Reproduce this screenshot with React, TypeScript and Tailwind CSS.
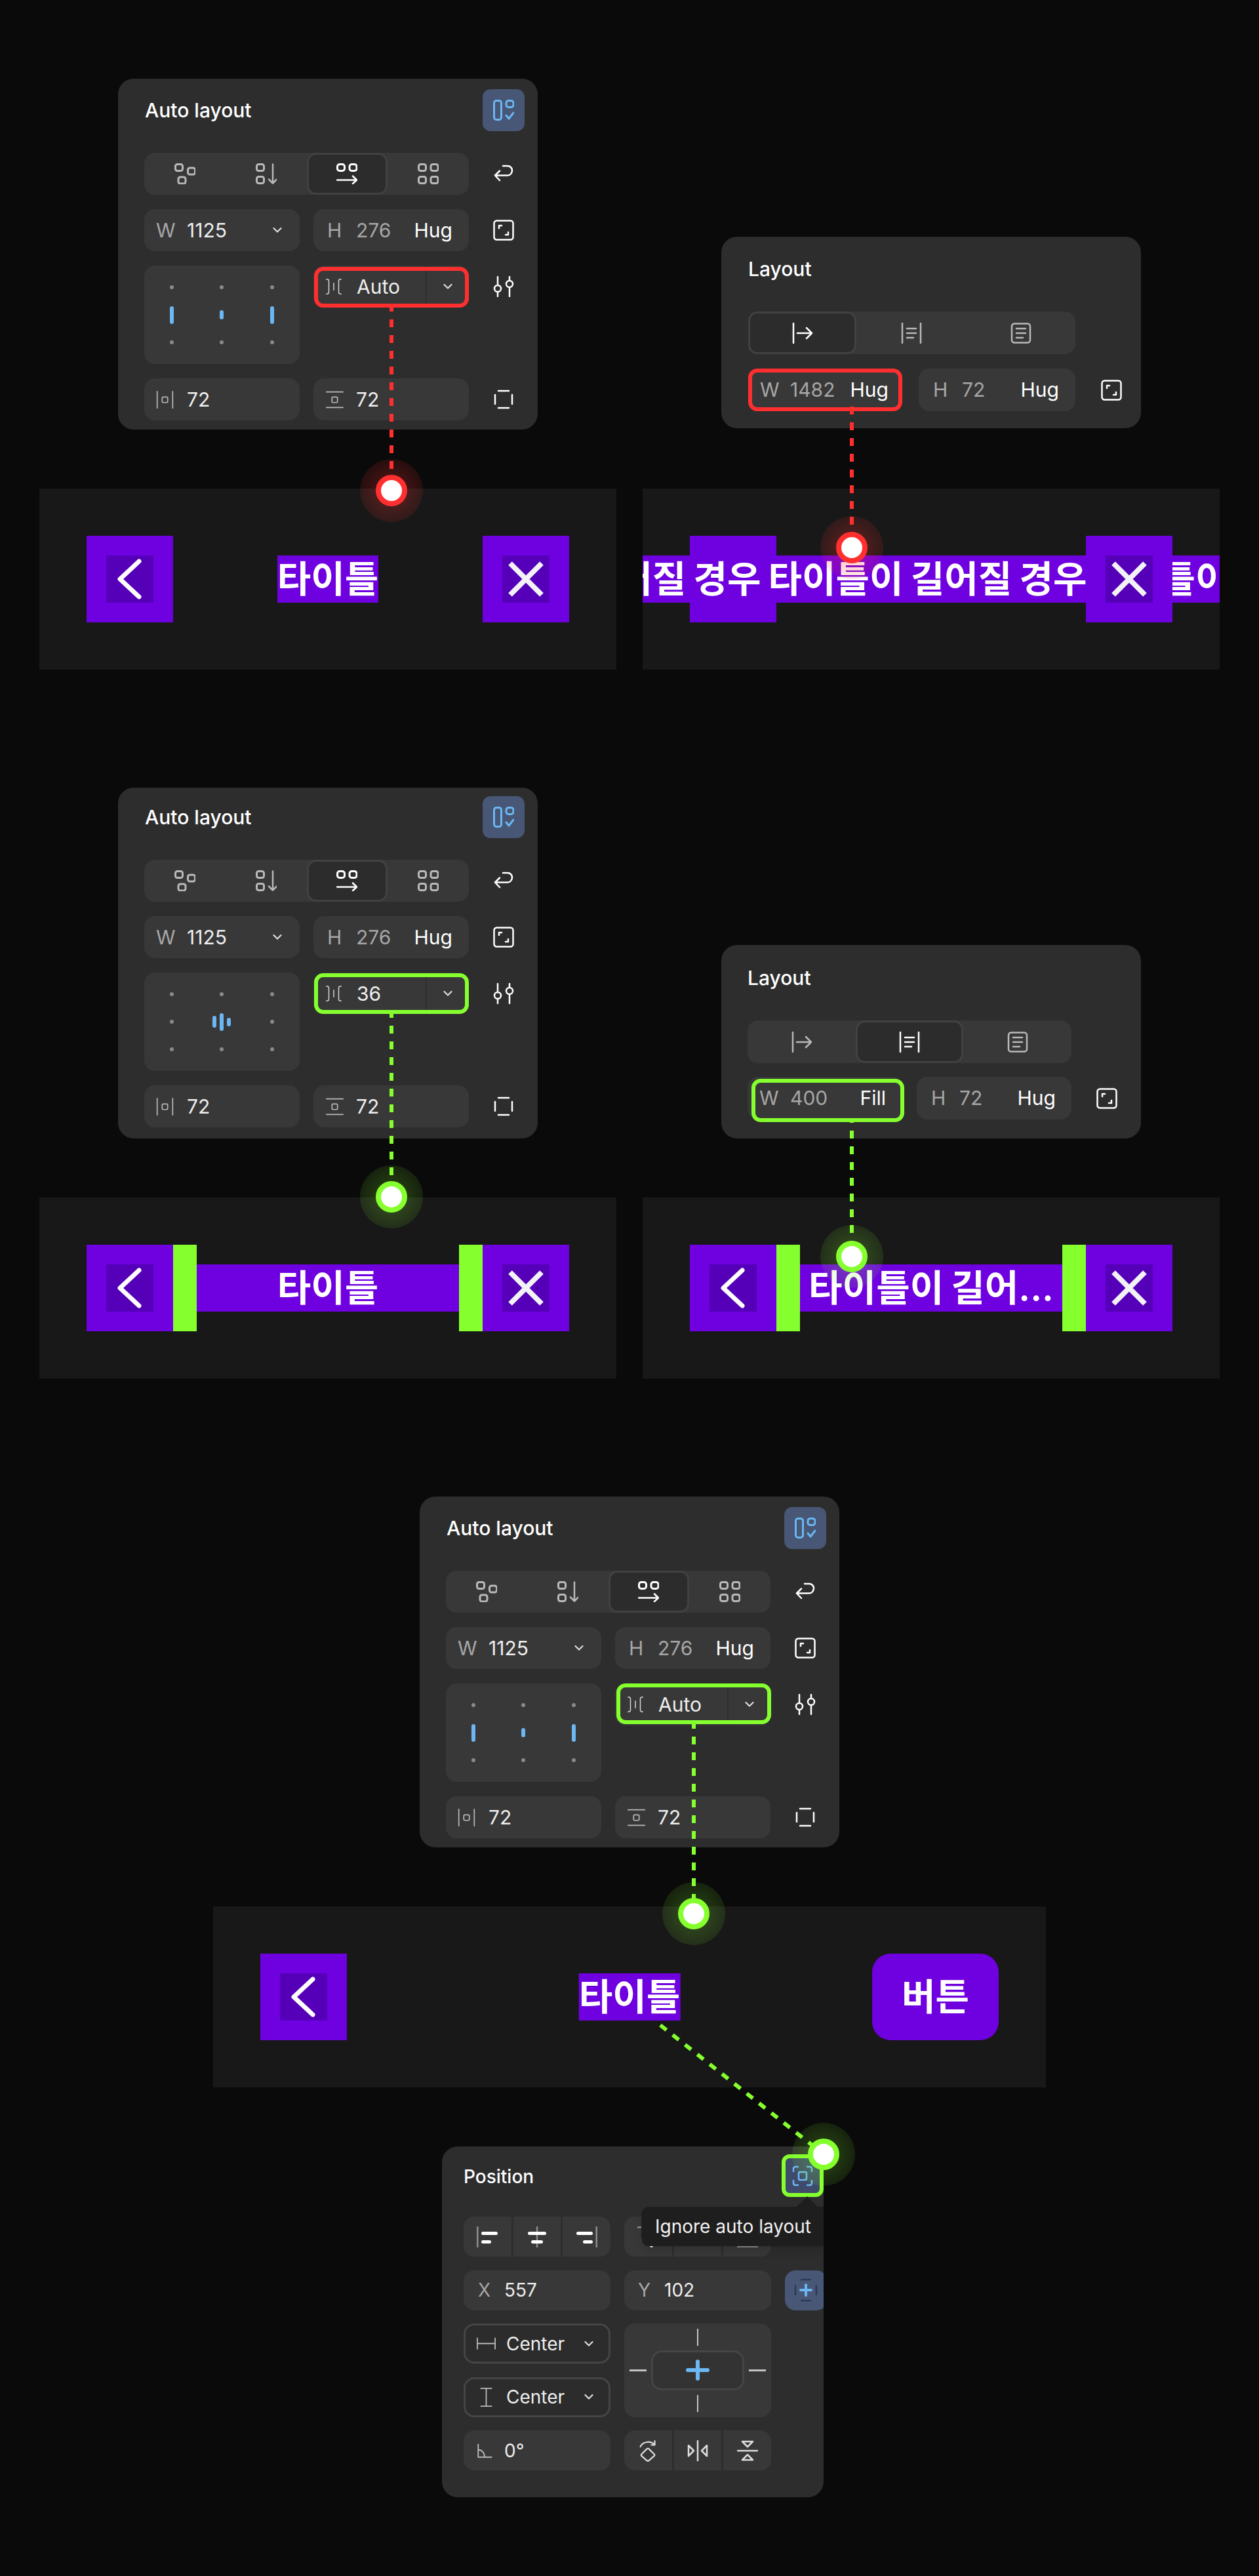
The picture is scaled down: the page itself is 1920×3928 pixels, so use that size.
import type { ReactNode } from 'react';

const BLUE = '#6cb6f2';
const GRAY = '#b9b9b9';
const RED = '#ff2f2f';
const GREEN = '#85ff2e';

function Svg({ children, className = 'w-8 h-8', color = GRAY, sw = 3 }: { children: ReactNode; className?: string; color?: string; sw?: number }) {
  return (
    <svg viewBox="0 0 32 32" className={`${className} shrink-0`} fill="none" stroke={color} strokeWidth={sw} strokeLinecap="round" strokeLinejoin="round">
      {children}
    </svg>
  );
}

// Auto layout mode icons
const FreeIcon = () => (
  <Svg>
    <rect x="1.5" y="1.5" width="11" height="10" rx="3" />
    <rect x="20.5" y="7" width="11" height="10" rx="3" />
    <rect x="6" y="21" width="11" height="10" rx="3" />
  </Svg>
);
const VerticalIcon = () => (
  <Svg>
    <rect x="1.5" y="1.5" width="11" height="10" rx="3" />
    <rect x="1.5" y="20.5" width="11" height="10" rx="3" />
    <path d="M26 1.5V30.5M20 24.5L26 30.5L32 24.5" strokeWidth="2.5" />
  </Svg>
);
const HorizontalIcon = () => (
  <Svg color="#ffffff">
    <rect x="1.5" y="1.5" width="11" height="10" rx="3.5" />
    <rect x="20" y="1.5" width="11" height="10" rx="3.5" />
    <path d="M1 25.5H31M25 19.5L31 25.5L25 31" strokeWidth="2.5" />
  </Svg>
);
const GridIcon = () => (
  <Svg>
    <rect x="1.5" y="1.5" width="11" height="10" rx="3" />
    <rect x="20" y="1.5" width="11" height="10" rx="3" />
    <rect x="1.5" y="20.5" width="11" height="10" rx="3" />
    <rect x="20" y="20.5" width="11" height="10" rx="3" />
  </Svg>
);
const WrapIcon = () => (
  <Svg color="#ffffff" sw={2.5}>
    <path d="M15 4H22C26 4 29 7 29 11C29 15 26 18.5 22 18.5H3M10 11.5L3 18.5L10 26" />
  </Svg>
);
const ResizeIcon = () => (
  <Svg color="#ffffff" sw={2.5}>
    <rect x="1.5" y="1.5" width="29" height="29" rx="4" />
    <path d="M9 13V9H13M19 23H23V19" />
  </Svg>
);
const SlidersIcon = () => (
  <Svg color="#ffffff" sw={2.5}>
    <path d="M7 1V14M7 24V31M25 1V6M25 18V31" />
    <circle cx="7" cy="19" r="5" />
    <circle cx="25" cy="12" r="5" />
  </Svg>
);
const PaddingAllIcon = () => (
  <Svg color="#ffffff" sw={2.5}>
    <path d="M8 3H24M8 29H24M3 9V23M29 9V23" />
  </Svg>
);
const PadHIcon = () => (
  <Svg className="w-[27px] h-[27px]" sw={2}>
    <path d="M2 1V31M30 1V31" />
    <rect x="11" y="11" width="10" height="10" rx="2" />
  </Svg>
);
const PadVIcon = () => (
  <Svg className="w-[27px] h-[27px]" sw={2}>
    <path d="M1 2H31M1 30H31" />
    <rect x="11" y="11" width="10" height="10" rx="2" />
  </Svg>
);
const GapIcon = () => (
  <Svg className="w-6 h-6" color="#d5d5d5" sw={2}>
    <path d="M1 1C6 1 6 3 6 6V26C6 29 6 31 1 31M31 1C26 1 26 3 26 6V26C26 29 26 31 31 31M16 9V23" />
  </Svg>
);
const ToggleIcon = () => (
  <Svg color={BLUE}>
    <rect x="1.5" y="1.5" width="11" height="29" rx="3.5" />
    <rect x="20" y="1.5" width="11" height="10" rx="3.5" />
    <path d="M20 24L24 29L31 20" />
  </Svg>
);

// Layout panel icons
const HugArrowIcon = ({ color = GRAY }: { color?: string }) => (
  <Svg color={color} sw={2.5}>
    <path d="M2 1V31M8 16H30M22 8L30 16L22 24" />
  </Svg>
);
const FillTextIcon = ({ color = GRAY }: { color?: string }) => (
  <Svg color={color} sw={2.5}>
    <path d="M2 1V31M30 1V31M9 9H23M9 16H23M9 23H19" />
  </Svg>
);
const DocIcon = () => (
  <Svg sw={2.5}>
    <rect x="2" y="1.5" width="28" height="29" rx="4" />
    <path d="M9 9H23M9 16H23M9 23H19" />
  </Svg>
);
const Chevron = () => (
  <svg viewBox="0 0 14 10" className="w-[14px] h-[10px] shrink-0" fill="none" stroke="#dddddd" strokeWidth="2.2" strokeLinecap="round" strokeLinejoin="round">
    <path d="M1.5 2L7 7.5L12.5 2" />
  </svg>
);

// Position panel icons
const AlignLeft = ({ className = 'w-8 h-8' }: { className?: string }) => (
  <svg viewBox="0 0 32 32" className={`${className} shrink-0`}>
    <rect x="0" y="0" width="2.5" height="32" fill="#8d8d8d" />
    <rect x="7" y="8" width="25" height="5" rx="2.5" fill="#ffffff" />
    <rect x="7" y="21" width="15" height="5" rx="2.5" fill="#ffffff" />
  </svg>
);
const AlignCenter = ({ className = 'w-8 h-8' }: { className?: string }) => (
  <svg viewBox="0 0 32 32" className={`${className} shrink-0`}>
    <rect x="14.8" y="0" width="2.5" height="32" fill="#8d8d8d" />
    <rect x="2" y="8" width="28" height="5" rx="2.5" fill="#ffffff" />
    <rect x="7" y="21" width="18" height="5" rx="2.5" fill="#ffffff" />
  </svg>
);
const AlignRight = ({ className = 'w-8 h-8' }: { className?: string }) => (
  <svg viewBox="0 0 32 32" className={`${className} shrink-0`}>
    <rect x="29.5" y="0" width="2.5" height="32" fill="#8d8d8d" />
    <rect x="0" y="8" width="25" height="5" rx="2.5" fill="#ffffff" />
    <rect x="10" y="21" width="15" height="5" rx="2.5" fill="#ffffff" />
  </svg>
);
const IgnoreIcon = () => (
  <Svg color={BLUE} sw={2.5}>
    <path d="M2 9V5C2 3 3 2 5 2H9M23 2H27C29 2 30 3 30 5V9M30 23V27C30 29 29 30 27 30H23M9 30H5C3 30 2 29 2 27V23" />
    <rect x="10" y="10" width="12" height="12" rx="2" />
  </Svg>
);
const ConstraintPlusIcon = () => (
  <svg viewBox="0 0 36 36" className="w-9 h-9 shrink-0" fill="none" strokeLinecap="round">
    <path d="M11 2H25M11 34H25M2 11V25M34 11V25" stroke="#2f3a55" strokeWidth="2.5" />
    <path d="M18 10V26M10 18H26" stroke={BLUE} strokeWidth="4" />
  </svg>
);
const WidthIcon = () => (
  <Svg className="w-[29px] h-[29px]" sw={2}>
    <path d="M1 7V25M31 7V25M1 16H31" />
  </Svg>
);
const HeightIcon = () => (
  <Svg className="w-[29px] h-[29px]" sw={2}>
    <path d="M7 1H25M7 31H25M16 1V31" />
  </Svg>
);
const AngleIcon = () => (
  <Svg className="w-6 h-6" sw={2.5}>
    <path d="M3 3V29H30M3 14C10 14 16 20 16 29" />
  </Svg>
);
const RotateIcon = () => (
  <svg viewBox="0 0 32 38" className="w-[28px] h-[34px] shrink-0" fill="none" stroke="#dddddd" strokeWidth="2.5" strokeLinecap="round" strokeLinejoin="round">
    <path d="M3 12C6 4 20 0 28 9M28 2V9H22" />
    <path d="M14 16C15 14.800 17 14.800 18 16L27 25C28 26 28 27 27 28L18 36C17 37 15 37 14 36L5 28C4 27 4 26 5 25Z" />
  </svg>
);
const FlipHIcon = () => (
  <Svg color="#dddddd" sw={2.5}>
    <path d="M16 1V31M2 8L10 16L2 24ZM30 8L22 16L30 24Z" />
  </Svg>
);
const FlipVIcon = () => (
  <Svg color="#dddddd" sw={2.5}>
    <path d="M1 16H31M8 2H24L16 10ZM8 30H24L16 22Z" />
  </Svg>
);

// Panels
function Field({ className = '', children }: { className?: string; children: ReactNode }) {
  return <div className={`relative flex items-center rounded-2xl bg-[#383838] ${className}`}>{children}</div>;
}

function Outline({ color, className }: { color: string; className: string }) {
  const border = color === RED ? 'border-[#ff2f2f]' : 'border-[#85ff2e]';
  return <div className={`absolute rounded-[14px] border-[6px] ${border} ${className}`} />;
}

function SegCell({ active, children }: { active?: boolean; children: ReactNode }) {
  return (
    <div className={`flex items-center justify-center rounded-[14px] ${active ? 'bg-[#2c2c2c] border-[3px] border-[#414141]' : ''}`}>
      {children}
    </div>
  );
}

function AlignBox({ spaced }: { spaced: boolean }) {
  const dot = <div className="w-[6px] h-[6px] rounded-full bg-[#8a8a8a]" />;
  const bar = (h: string) => <div className={`w-[6px] rounded-full bg-[#6cb6f2] ${h}`} />;
  const cells = spaced
    ? [dot, dot, dot, dot, <div className="flex items-center gap-[5px]">{bar('h-[18px]')}{bar('h-[27px]')}{bar('h-[13px]')}</div>, dot, dot, dot, dot]
    : [dot, dot, dot, bar('h-[27px]'), bar('h-[14px]'), bar('h-[27px]'), dot, dot, dot];
  return (
    <div className="grid grid-cols-3 grid-rows-3 rounded-2xl bg-[#383838] px-[4px] py-[12px] h-[150px]">
      {cells.map((c, i) => (
        <div key={i} className="flex items-center justify-center">{c}</div>
      ))}
    </div>
  );
}

function AutoLayoutPanel({ gapValue, color, spaced = false, padTop = 'pt-[16px]', outline }: { gapValue: string; color: string; spaced?: boolean; padTop?: string; outline: string }) {
  return (
    <div className={`w-[640px] h-[535px] rounded-[24px] bg-[#2d2d2d] pl-[40px] pr-[20px] text-[30px] text-[#eeeeee] ${padTop}`}>
      <div className="flex items-center justify-between h-[64px]">
        <span className="ml-px font-medium text-white">Auto layout</span>
        <div className="flex items-center justify-center w-16 h-16 rounded-xl bg-[#475775]">
          <ToggleIcon />
        </div>
      </div>
      <div className="grid grid-cols-[237px_237px_64px] grid-rows-[64px_64px_150px_64px] gap-x-[21px] gap-y-[22px] mt-[33px]">
        <div className="col-span-2 grid grid-cols-4 rounded-2xl bg-[#383838]">
          <SegCell><FreeIcon /></SegCell>
          <SegCell><VerticalIcon /></SegCell>
          <SegCell active><HorizontalIcon /></SegCell>
          <SegCell><GridIcon /></SegCell>
        </div>
        <div className="flex items-center justify-center"><WrapIcon /></div>

        <Field className="pl-[18px] pr-[27px]">
          <span className="w-[47px] text-[#a6a6a6]">W</span>
          <span className="flex-1">1125</span>
          <Chevron />
        </Field>
        <Field className="pl-[21px] pr-[25px]">
          <span className="w-[44px] text-[#a6a6a6]">H</span>
          <span className="flex-1 text-[#a6a6a6]">276</span>
          <span className="text-white">Hug</span>
        </Field>
        <div className="flex items-center justify-center"><ResizeIcon /></div>

        <AlignBox spaced={spaced} />
        <div className="relative h-[64px]">
          <Field className="h-[64px]">
            <div className="flex items-center flex-1 pl-[19px]">
              <div className="w-[47px]"><GapIcon /></div>
              <span>{gapValue}</span>
            </div>
            <div className="flex items-center justify-center w-[66px] h-full border-l-2 border-[#2e2e2e]"><Chevron /></div>
          </Field>
          <Outline color={color} className={outline} />
        </div>
        <div className="flex items-start justify-center pt-[16px]"><SlidersIcon /></div>

        <Field className="pl-[18px]">
          <div className="w-[47px]"><PadHIcon /></div>
          <span>72</span>
        </Field>
        <Field className="pl-[19px]">
          <div className="w-[46px]"><PadVIcon /></div>
          <span>72</span>
        </Field>
        <div className="flex items-center justify-center"><PaddingAllIcon /></div>
      </div>
    </div>
  );
}

function LayoutPanelRed() {
  return (
    <div className="w-[640px] h-[292px] rounded-[24px] bg-[#2d2d2d] pl-[41px] pt-[33px] text-[30px] text-[#eeeeee]">
      <div className="h-8 leading-8 font-medium text-white">Layout</div>
      <div className="grid grid-cols-[165px_167px_167px] w-[499px] h-[65px] mt-[49px] rounded-2xl bg-[#383838]">
        <SegCell active><HugArrowIcon color="#ffffff" /></SegCell>
        <SegCell><FillTextIcon /></SegCell>
        <SegCell><DocIcon /></SegCell>
      </div>
      <div className="flex items-center mt-[22px] h-[65px]">
        <Field className="w-[235px] h-full pl-[18px]">
          <span className="w-[46px] text-[#a6a6a6]">W</span>
          <span className="flex-1 text-[#a6a6a6]">1482</span>
          <span className="mr-[21px] text-white">Hug</span>
          <Outline color={RED} className="inset-0" />
        </Field>
        <Field className="w-[239px] h-full ml-[25px] pl-[22px]">
          <span className="w-[44px] text-[#a6a6a6]">H</span>
          <span className="flex-1 text-[#a6a6a6]">72</span>
          <span className="mr-[25px] text-white">Hug</span>
        </Field>
        <div className="ml-[39px]"><ResizeIcon /></div>
      </div>
    </div>
  );
}

function LayoutPanelGreen() {
  return (
    <div className="w-[640px] h-[295px] rounded-[24px] bg-[#2d2d2d] pl-[40px] pt-[34px] text-[30px] text-[#eeeeee]">
      <div className="h-8 leading-8 font-medium text-white">Layout</div>
      <div className="grid grid-cols-[165px_164px_165px] w-[494px] h-[65px] mt-[49px] rounded-2xl bg-[#383838]">
        <SegCell><HugArrowIcon /></SegCell>
        <SegCell active><FillTextIcon color="#ffffff" /></SegCell>
        <SegCell><DocIcon /></SegCell>
      </div>
      <div className="flex items-center mt-[21px] h-[65px]">
        <Field className="w-[237px] h-full pl-[18px]">
          <span className="w-[47px] text-[#a6a6a6]">W</span>
          <span className="flex-1 text-[#a6a6a6]">400</span>
          <span className="mr-[26px] text-white">Fill</span>
          <Outline color={GREEN} className="left-[6px] right-[-2px] top-[3px] bottom-[-4px]" />
        </Field>
        <Field className="w-[236px] h-full ml-[21px] pl-[22px]">
          <span className="w-[43px] text-[#a6a6a6]">H</span>
          <span className="flex-1 text-[#a6a6a6]">72</span>
          <span className="mr-[24px] text-white">Hug</span>
        </Field>
        <div className="ml-[38px]"><ResizeIcon /></div>
      </div>
    </div>
  );
}

function PosCells({ children }: { children: ReactNode }) {
  return <div className="grid grid-cols-3 gap-x-[3px] rounded-2xl overflow-hidden">{children}</div>;
}
function PosCell({ children }: { children: ReactNode }) {
  return <div className="flex items-center justify-center bg-[#383838]">{children}</div>;
}
function Select({ icon, iconBox }: { icon: ReactNode; iconBox: string }) {
  return (
    <div className="flex items-center rounded-2xl border-[3px] border-[#454545] bg-[#2c2c2c]">
      <div className={`flex justify-center ${iconBox}`}>{icon}</div>
      <span className="flex-1">Center</span>
      <div className="mr-[23px]"><Chevron /></div>
    </div>
  );
}

function PositionPanel() {
  return (
    <div className="relative ml-[10px] w-[582px] h-[535px] rounded-[24px] bg-[#2d2d2d] overflow-hidden pl-[33px] pt-[12px] text-[28px] text-[#eeeeee]">
      <div className="flex items-center justify-between h-[65px]">
        <span className="mt-[3px] font-medium text-white">Position</span>
        <div className="flex items-center justify-center w-16 h-[65px] rounded-xl border-[6px] border-[#85ff2e] bg-[#3f4b6a]">
          <IgnoreIcon />
        </div>
      </div>
      <div className="grid grid-cols-[224px_224px_64px] grid-rows-[61px_61px_61px_61px_61px] gap-x-[21px] gap-y-[20.5px] mt-[30px] w-[600px]">
        <PosCells>
          <PosCell><AlignLeft /></PosCell>
          <PosCell><AlignCenter /></PosCell>
          <PosCell><AlignRight /></PosCell>
        </PosCells>
        <PosCells>
          <PosCell><AlignLeft className="w-8 h-8 rotate-90" /></PosCell>
          <PosCell><AlignCenter className="w-8 h-8 rotate-90" /></PosCell>
          <PosCell><AlignRight className="w-8 h-8 rotate-90" /></PosCell>
        </PosCells>
        <div />

        <Field className="pl-[22px]">
          <span className="w-[40px] text-[#a6a6a6]">X</span>
          <span>557</span>
        </Field>
        <Field className="pl-[21px]">
          <span className="w-[40px] text-[#a6a6a6]">Y</span>
          <span>102</span>
        </Field>
        <div className="flex items-center justify-center rounded-2xl bg-[#475775]"><ConstraintPlusIcon /></div>

        <Select icon={<WidthIcon />} iconBox="w-[62px]" />
        <div className="row-span-2 relative flex items-center justify-center rounded-2xl bg-[#383838]">
          <div className="absolute top-[8px] w-[2.5px] h-[26px] bg-[#c4c4c4]" />
          <div className="absolute bottom-[8px] w-[2.5px] h-[26px] bg-[#c4c4c4]" />
          <div className="absolute left-[8px] w-[26px] h-[2.5px] bg-[#c4c4c4]" />
          <div className="absolute right-[8px] w-[26px] h-[2.5px] bg-[#c4c4c4]" />
          <div className="flex items-center justify-center w-[142px] h-[61px] rounded-2xl border-[3px] border-[#454545] bg-[#333333]">
            <svg viewBox="0 0 36 32" className="w-9 h-8" fill="none" stroke={BLUE} strokeWidth="6" strokeLinecap="round">
              <path d="M18 3V29M3 16H33" />
            </svg>
          </div>
        </div>
        <div />

        <Select icon={<HeightIcon />} iconBox="w-[62px]" />
        <div />

        <Field className="pl-[20px]">
          <div className="w-[42px]"><AngleIcon /></div>
          <span>0°</span>
        </Field>
        <PosCells>
          <PosCell><RotateIcon /></PosCell>
          <PosCell><FlipHIcon /></PosCell>
          <PosCell><FlipVIcon /></PosCell>
        </PosCells>
        <div />
      </div>

      {/* tooltip */}
      <div className="absolute left-[304px] top-[92px] w-[300px] h-[60px] flex items-center pl-[21px] rounded-xl bg-[#1e1e1e] shadow-lg text-[#f2f2f2]">
        <div className="absolute left-[241px] top-[-11px] w-6 h-6 rotate-45 bg-[#1e1e1e]" />
        <span className="relative">Ignore auto layout</span>
      </div>
    </div>
  );
}

// Preview bars
const BackGlyph = () => (
  <svg viewBox="0 0 72 72" className="w-[72px] h-[72px] bg-[#5500b8]" fill="none" stroke="#ffffff" strokeWidth="7" strokeLinecap="round" strokeLinejoin="round">
    <path d="M50 9L21 36L50 63" />
  </svg>
);
const CloseGlyph = () => (
  <svg viewBox="0 0 72 72" className="w-[72px] h-[72px] bg-[#5500b8]" fill="none" stroke="#f2f2f7" strokeWidth="8" strokeLinejoin="round">
    <path d="M12 12L60 60M60 12L12 60" />
  </svg>
);
function IconBtn({ children, className = '' }: { children?: ReactNode; className?: string }) {
  return <div className={`flex items-center justify-center w-[132px] h-[132px] shrink-0 bg-[#6f00e0] ${className}`}>{children}</div>;
}
const Title = ({ children, className = '' }: { children: ReactNode; className?: string }) => (
  <div className={`h-[72px] bg-[#6f00e0] text-[56px] leading-[72px] font-semibold text-white whitespace-nowrap ${className}`}>{children}</div>
);
const Bar = ({ children, className = 'w-[880px]' }: { children: ReactNode; className?: string }) => (
  <div className={`relative flex items-center h-[276px] px-[72px] bg-[#181818] overflow-hidden ${className}`}>{children}</div>
);
const GreenGap = () => <div className="w-[36px] h-[132px] shrink-0 bg-[#85ff2e]" />;

// Annotation lines and pins drawn over the whole page
const LINES = [
  { x1: 597, y1: 463, x2: 597, y2: 748, c: RED, o: 0 },
  { x1: 1299, y1: 620, x2: 1299, y2: 835, c: RED, o: 0 },
  { x1: 597, y1: 1540, x2: 597, y2: 1825, c: GREEN, o: 0 },
  { x1: 1299, y1: 1705, x2: 1299, y2: 1916, c: GREEN, o: 5 },
  { x1: 1058, y1: 2624, x2: 1058, y2: 2918, c: GREEN, o: 0 },
  { x1: 1007, y1: 3088, x2: 1256, y2: 3285, c: GREEN, o: 0 },
];
const PINS = [
  { x: 597, y: 748, c: RED },
  { x: 1299, y: 835, c: RED },
  { x: 597, y: 1825, c: GREEN },
  { x: 1299, y: 1916, c: GREEN },
  { x: 1058, y: 2918, c: GREEN },
  { x: 1256, y: 3285, c: GREEN },
];

function Overlay() {
  return (
    <svg width="1920" height="3928" className="absolute left-0 top-0 pointer-events-none">
      <defs>
        <radialGradient id="halo-red">
          <stop offset="0.4" stopColor={RED} stopOpacity="0.24" />
          <stop offset="1" stopColor={RED} stopOpacity="0.11" />
        </radialGradient>
        <radialGradient id="halo-green">
          <stop offset="0.4" stopColor={GREEN} stopOpacity="0.2" />
          <stop offset="1" stopColor={GREEN} stopOpacity="0.1" />
        </radialGradient>
      </defs>
      {LINES.map((l, i) => (
        <line key={i} x1={l.x1} y1={l.y1} x2={l.x2} y2={l.y2} stroke={l.c} strokeWidth="6" strokeDasharray="12 12" strokeDashoffset={l.o} />
      ))}
      {PINS.map((p, i) => (
        <g key={i}>
          <circle cx={p.x} cy={p.y} r="48" fill={p.c === RED ? 'url(#halo-red)' : 'url(#halo-green)'} />
          <circle cx={p.x} cy={p.y} r="20" fill="#ffffff" stroke={p.c} strokeWidth="8" />
        </g>
      ))}
    </svg>
  );
}

export default function App() {
  return (
    <div className="relative w-full h-[3928px] bg-[#0a0a0a] pt-[120px] font-['Inter','Noto_Sans_CJK_KR',sans-serif]">
      {/* first row */}
      <div className="grid grid-cols-[880px_880px] gap-x-[40px] px-[60px]">
        <div className="flex flex-col items-center justify-end gap-[90px]">
          <AutoLayoutPanel gapValue="Auto" color={RED} outline="left-px right-0 top-[2px] bottom-0" />
          <Bar>
            <IconBtn><BackGlyph /></IconBtn>
            <div className="flex flex-1 justify-center"><Title>타이틀</Title></div>
            <IconBtn><CloseGlyph /></IconBtn>
          </Bar>
        </div>
        <div className="flex flex-col items-center justify-end gap-[92px]">
          <LayoutPanelRed />
          <Bar className="w-[880px] justify-between">
            <IconBtn />
            <Title className="absolute inset-x-0 flex justify-center pr-[11px] [word-spacing:-3px]">타이틀이 길어질 경우 타이틀이 길어질 경우 타이틀이 길어질 경우</Title>
            <IconBtn className="relative"><CloseGlyph /></IconBtn>
          </Bar>
        </div>
      </div>

      {/* second row */}
      <div className="grid grid-cols-[880px_880px] gap-x-[40px] px-[60px] mt-[180px]">
        <div className="flex flex-col items-center justify-end gap-[90px]">
          <AutoLayoutPanel gapValue="36" color={GREEN} spaced padTop="pt-[13px]" outline="left-px right-0 top-px bottom-px" />
          <Bar>
            <IconBtn><BackGlyph /></IconBtn>
            <GreenGap />
            <Title className="flex-1 text-center">타이틀</Title>
            <GreenGap />
            <IconBtn><CloseGlyph /></IconBtn>
          </Bar>
        </div>
        <div className="flex flex-col items-center justify-end gap-[90px]">
          <LayoutPanelGreen />
          <Bar>
            <IconBtn><BackGlyph /></IconBtn>
            <GreenGap />
            <Title className="flex-1 min-w-0 text-center [word-spacing:-3px]">타이틀이 길어...</Title>
            <GreenGap />
            <IconBtn><CloseGlyph /></IconBtn>
          </Bar>
        </div>
      </div>

      {/* third row */}
      <div className="flex flex-col items-center gap-[90px] mt-[180px]">
        <AutoLayoutPanel gapValue="Auto" color={GREEN} outline="left-[2px] right-[-1px] top-0 bottom-[2px]" />
        <Bar className="w-[1270px] justify-between">
          <IconBtn><BackGlyph /></IconBtn>
          <Title className="absolute left-1/2 -translate-x-1/2">타이틀</Title>
          <div className="flex items-center justify-center w-[193px] h-[132px] rounded-[28px] bg-[#6f00e0] text-[56px] font-semibold text-white">버튼</div>
        </Bar>
        <PositionPanel />
      </div>

      <Overlay />
    </div>
  );
}
